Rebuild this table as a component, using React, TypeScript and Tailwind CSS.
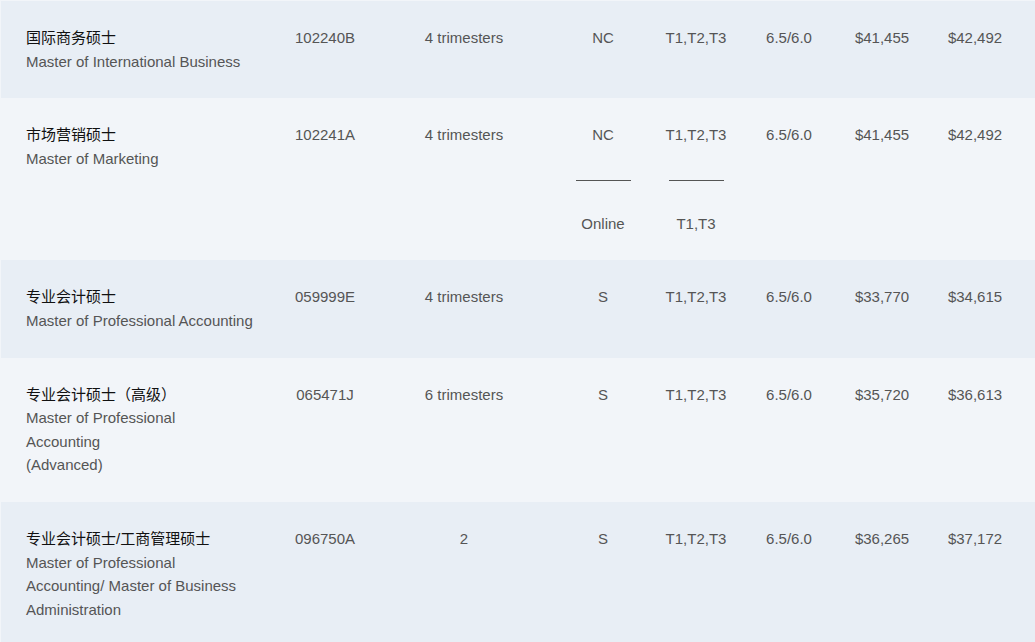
import React from "react";

type Row = {
  zh: string;
  en: string[];
  code: string;
  duration: string;
  mode: string[];
  intake: string[];
  ielts: string;
  fee2024: string;
  fee2025: string;
};

const rows: Row[] = [
  {
    zh: "国际商务硕士",
    en: ["Master of International Business"],
    code: "102240B",
    duration: "4 trimesters",
    mode: ["NC"],
    intake: ["T1,T2,T3"],
    ielts: "6.5/6.0",
    fee2024: "$41,455",
    fee2025: "$42,492",
  },
  {
    zh: "市场营销硕士",
    en: ["Master of Marketing"],
    code: "102241A",
    duration: "4 trimesters",
    mode: ["NC", "Online"],
    intake: ["T1,T2,T3", "T1,T3"],
    ielts: "6.5/6.0",
    fee2024: "$41,455",
    fee2025: "$42,492",
  },
  {
    zh: "专业会计硕士",
    en: ["Master of Professional Accounting"],
    code: "059999E",
    duration: "4 trimesters",
    mode: ["S"],
    intake: ["T1,T2,T3"],
    ielts: "6.5/6.0",
    fee2024: "$33,770",
    fee2025: "$34,615",
  },
  {
    zh: "专业会计硕士（高级）",
    en: ["Master of Professional", "Accounting", "(Advanced)"],
    code: "065471J",
    duration: "6 trimesters",
    mode: ["S"],
    intake: ["T1,T2,T3"],
    ielts: "6.5/6.0",
    fee2024: "$35,720",
    fee2025: "$36,613",
  },
  {
    zh: "专业会计硕士/工商管理硕士",
    en: ["Master of Professional", "Accounting/ Master of Business", "Administration"],
    code: "096750A",
    duration: "2",
    mode: ["S"],
    intake: ["T1,T2,T3"],
    ielts: "6.5/6.0",
    fee2024: "$36,265",
    fee2025: "$37,172",
  },
];

// a cell that can hold a second option below a short rule
const Stack = ({ items }: { items: string[] }) => (
  <div className="flex flex-col items-center">
    <div>{items[0]}</div>
    {items.length > 1 && (
      <>
        <div className="mt-[33px] h-px w-[55px] bg-[#555]" />
        <div className="mt-[31px]">{items[1]}</div>
      </>
    )}
  </div>
);

const App = () => {
  return (
    <div
      className="min-h-[642px] bg-[#f2f5f9] pt-px pl-px text-[15px] leading-[23.6px] text-[#555]"
      style={{ fontFamily: '"Liberation Sans", "Noto Sans CJK SC", Arial, sans-serif' }}
    >
      {rows.map((r, i) => (
        <div
          key={r.code}
          className={`grid grid-cols-[279px_90px_188px_90px_96px_90px_96px_90px] py-[25px] ${
            i % 2 === 0 ? "bg-[#e8eef5]" : "bg-[#f2f5f9]"
          }`}
        >
          <div className="pl-[25px]">
            <div className="text-[#111]">{r.zh}</div>
            {r.en.map((line) => (
              <div key={line}>{line}</div>
            ))}
          </div>
          <div className="text-center">{r.code}</div>
          <div className="text-center">{r.duration}</div>
          <Stack items={r.mode} />
          <Stack items={r.intake} />
          <div className="text-center">{r.ielts}</div>
          <div className="text-center">{r.fee2024}</div>
          <div className="text-center">{r.fee2025}</div>
        </div>
      ))}
    </div>
  );
};

export default App;
